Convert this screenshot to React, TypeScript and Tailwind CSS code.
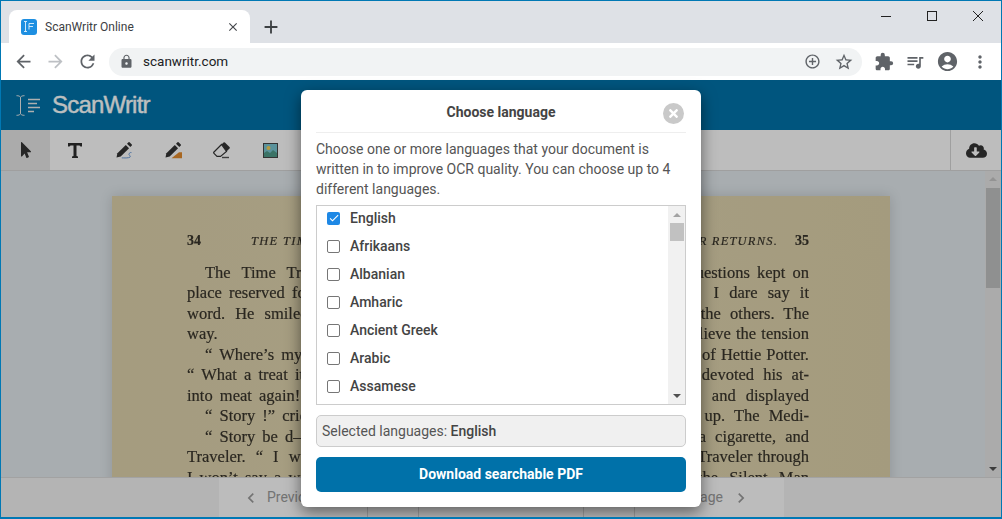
import {
  MdArrowBack,
  MdArrowForward,
  MdRefresh,
  MdLock,
  MdAddCircleOutline,
  MdStarBorder,
  MdExtension,
  MdQueueMusic,
  MdAccountCircle,
  MdMoreVert,
  MdClose,
  MdAdd,
  MdCheck,
  MdChevronLeft,
  MdChevronRight,
} from 'react-icons/md';
import { FaCloudDownloadAlt, FaMousePointer, FaTimes } from 'react-icons/fa';

const languages = ['English', 'Afrikaans', 'Albanian', 'Amharic', 'Ancient Greek', 'Arabic', 'Assamese', 'Azerbaijani'];

const leftLines = [
  { text: 'The Time Traveler came to the', cls: 'pl-[18px] [word-spacing:7px]' },
  { text: 'place reserved for him without a', cls: '' },
  { text: 'word. He smiled quietly, in his', cls: '[word-spacing:6px]' },
  { text: 'way.', cls: '' },
  { text: '“ Where’s my share?” he said.', cls: 'pl-[18px]' },
  { text: '“ What a treat it is to stick a fork', cls: '' },
  { text: 'into meat again! I have been', cls: '' },
  { text: '“ Story !” cried the Editor.', cls: 'pl-[18px]' },
  { text: '“ Story be d—d!” said the Time', cls: 'pl-[18px]' },
  { text: 'Traveler. “ I want something', cls: '[word-spacing:6px]' },
  { text: 'I won’t say a word until I get', cls: '' },
];

const rightLines = [
  { text: 'questions kept on', cls: '' },
  { text: 'I dare say it', cls: '[word-spacing:6px]' },
  { text: 'the others. The', cls: '[word-spacing:5px]' },
  { text: 'relieve the tension', cls: '[word-spacing:1px]' },
  { text: 'of Hettie Potter.', cls: '[word-spacing:1px]' },
  { text: 'devoted his at-', cls: '[word-spacing:5px]' },
  { text: 'and displayed', cls: '[word-spacing:6px]' },
  { text: 'up. The Medi-', cls: '[word-spacing:5px]' },
  { text: 'a cigarette, and', cls: '[word-spacing:5px]' },
  { text: 'Traveler through', cls: '[word-spacing:1px]' },
  { text: 'the Silent Man', cls: '[word-spacing:7px]' },
];

function Pencil({ mark }: { mark: 'squiggle' | 'fill' }) {
  return (
    <svg width="18" height="18" viewBox="0 0 24 24">
      <path d="M2 22l1.200-5.600L14.400 5.200l4.400 4.400L7.600 20.800z" fill="#333" />
      <path d="M16 3.600l2-2a1 1 0 0 1 1.400 0l3 3a1 1 0 0 1 0 1.400l-2 2z" fill="#333" />
      {mark === 'squiggle' ? (
        <path d="M9 22.500c3 0 9 .5 11-1s-3-3-1-5 3-1 3-1" fill="none" stroke="#5b8fd0" strokeWidth="1.200" />
      ) : (
        <path d="M10 23l10-8h4v8z" fill="#e08a2c" />
      )}
    </svg>
  );
}

function EraserIcon() {
  return (
    <svg width="18" height="17" viewBox="0 0 18 17">
      <path d="M8.500 2.500l2-2a1 1 0 0 1 1.400 0l4.600 4.600a1 1 0 0 1 0 1.400l-3 3z" fill="#333" />
      <path d="M8.500 2.500L1 10a1 1 0 0 0 0 1.400l3 3h3.500l6-5z" fill="#fdfdfd" stroke="#333" strokeWidth="1.200" />
      <path d="M9 15.500h7" stroke="#555" strokeWidth="1.400" />
    </svg>
  );
}

function PictureIcon() {
  return (
    <svg width="15" height="15" viewBox="0 0 15 15">
      <rect x="0.500" y="0.500" width="14" height="14" fill="#79c3cf" stroke="#444" />
      <circle cx="5.500" cy="5" r="2" fill="#f2cf55" />
      <path d="M1 14V10l3-2 3 2 3-3 4 3v4z" fill="#4f9a88" />
    </svg>
  );
}

function LogoMark({ className }: { className: string }) {
  return (
    <svg className={className} viewBox="0 0 25 21" fill="none" stroke="currentColor" strokeWidth="1">
      <path d="M0.500 0.700c2 0 3 .3 4 1.500 1-1.200 2-1.500 4-1.500M4.500 2.200v16.600M0.500 20.300c2 0 3-.3 4-1.500 1 1.200 2 1.500 4 1.500" />
      <path d="M12 4.500h12M12 8.500h9M12 12.500h12M12 16.500h6" strokeWidth="1.500" />
    </svg>
  );
}

function ChromeBar() {
  return (
    <div className="shrink-0 font-['Roboto',sans-serif]">
      <div className="h-[42px] bg-[#dee1e6] flex items-end pl-[8px]">
        <div className="w-[241px] h-[33px] bg-white rounded-t-[8px] flex items-center pl-[12px] pr-[10px]">
          <div className="w-4 h-4 rounded-[3px] bg-[#1e8fe1] text-[#cfe8fa] flex items-center justify-center">
            <svg width="12" height="11" viewBox="0 0 12 11" fill="none" stroke="currentColor">
              <path d="M1 .500h3M2.500 .500v10M1 10.500h3M6 2.500h5M6 5.500h4M6 2.500v6" />
            </svg>
          </div>
          <span className="ml-2 text-[12px] text-[#3c4043]">ScanWritr Online</span>
          <MdClose className="ml-auto text-[#45484c]" size={14} />
        </div>
        <div className="w-[42px] h-[33px] flex items-center justify-center">
          <MdAdd className="text-[#3c4043]" size={22} />
        </div>
        <div className="ml-auto self-start flex items-center h-[30px] text-[#222]">
          <div className="w-[46px] flex justify-center">
            <div className="w-[10px] h-px bg-[#222]" />
          </div>
          <div className="w-[46px] flex justify-center">
            <div className="w-[10px] h-[10px] border border-[#222]" />
          </div>
          <div className="w-[46px] flex justify-center">
            <svg width="10" height="10" viewBox="0 0 10 10" stroke="#222">
              <path d="M0 0l10 10M10 0L0 10" />
            </svg>
          </div>
        </div>
      </div>
      <div className="h-[37px] bg-white flex items-center text-[#5f6368]">
        <div className="w-[108px] flex items-center pl-[12px] gap-[11px]">
          <MdArrowBack size={21} />
          <MdArrowForward size={21} className="text-[#bdc0c4]" />
          <MdRefresh size={21} />
        </div>
        <div className="w-[753px] h-7 rounded-full bg-[#f1f3f4] flex items-center pl-[10px] pr-[8px]">
          <MdLock size={15} />
          <span className="ml-[9px] text-[13.500px] text-[#202124]">scanwritr.com</span>
          <MdAddCircleOutline size={17} className="ml-auto" />
          <MdStarBorder size={20} className="ml-[13px]" />
        </div>
        <div className="flex items-center pl-[12px] gap-[11px]">
          <MdExtension size={20} />
          <MdQueueMusic size={20} />
          <MdAccountCircle size={23} />
          <MdMoreVert size={20} />
        </div>
      </div>
    </div>
  );
}

function Toolbar() {
  return (
    <div className="h-[41px] shrink-0 bg-[#fdfdfd] border-b border-[#d5d5d5] flex text-[#333]">
      <div className="w-[49px] bg-[#e5e5e5] flex items-center justify-center">
        <FaMousePointer size={16} />
      </div>
      <div className="w-[49px] flex items-center justify-center">
        <svg width="14" height="15" viewBox="0 0 14 15">
          <path d="M0 0h14v3.500h-1.500l-1-1H8.500v10.500l1.500.500V15H4v-1.500l1.500-.500V2.500h-3l-1 1H0z" fill="#2c2c2c" />
        </svg>
      </div>
      <div className="w-[49px] flex items-center justify-center">
        <Pencil mark="squiggle" />
      </div>
      <div className="w-[49px] flex items-center justify-center">
        <Pencil mark="fill" />
      </div>
      <div className="w-[49px] flex items-center justify-center">
        <EraserIcon />
      </div>
      <div className="w-[49px] flex items-center justify-center">
        <PictureIcon />
      </div>
      <div className="ml-auto w-[51px] border-l border-[#d5d5d5] flex items-center justify-center">
        <FaCloudDownloadAlt size={21} />
      </div>
    </div>
  );
}

function BookPage() {
  return (
    <div className="ml-[111px] mt-[25px] w-[778px] h-[320px] shrink-0 bg-gradient-to-r from-[#dcd0aa] via-[#e0d5b0] to-[#dbcfa8] shadow-[0_0_12px_rgba(0,0,0,0.15)] grid grid-cols-2 pl-[75px] pr-[81px] pt-[35px] font-['Liberation_Serif',serif] text-[#38342b] text-[16.500px] leading-[20.450px] [word-spacing:3px] [-webkit-text-stroke:0.2px] blur-[0.3px]">
      <div className="whitespace-nowrap overflow-hidden">
        <div className="flex gap-[50px] h-[22px] text-[12.500px] [word-spacing:0px] tracking-[1.300px]">
          <b className="text-[14px] tracking-normal">34</b>
          <i>THE TIME TRAVELER</i>
        </div>
        <div className="mt-[10px]">
          {leftLines.map(line => (
            <div key={line.text} className={line.cls}>{line.text}</div>
          ))}
        </div>
      </div>
      <div className="whitespace-nowrap overflow-hidden text-right">
        <div className="flex justify-end gap-[17px] h-[22px] text-[12.500px] [word-spacing:0px] tracking-[1.200px]">
          <i>TRAVELER RETURNS.</i>
          <b className="text-[14px] tracking-normal">35</b>
        </div>
        <div className="mt-[10px]">
          {rightLines.map(line => (
            <div key={line.text} className={line.cls}>{line.text}</div>
          ))}
        </div>
      </div>
    </div>
  );
}

function BottomBar() {
  const cell = 'h-full border-r border-[#d5d5d5] flex items-center';
  return (
    <div className="h-[40px] shrink-0 bg-[#f1f1f1] border-t border-[#d8d8d8] flex justify-center font-['Roboto',sans-serif] text-[14px] text-[#9a9a9a]">
      <div className="ml-[217px] w-[566px] h-full bg-[#fbfbfb] flex border-l border-[#f1f1f1]">
        <div className={`${cell} w-[149px] pl-[22px] gap-[6px]`}>
          <MdChevronLeft size={20} />
          <span>Previous page</span>
        </div>
        <div className={`${cell} w-[51px]`} />
        <div className={`${cell} w-[165px]`} />
        <div className={`${cell} w-[51px]`} />
        <div className="h-full flex-1 flex items-center justify-end pr-[33px] gap-[8px]">
          <span>Next page</span>
          <MdChevronRight size={20} />
        </div>
      </div>
      <div className="flex-1" />
    </div>
  );
}

function LanguageModal() {
  return (
    <div className="absolute left-[300px] top-[10px] w-[400px] h-[417px] bg-white rounded-[6px] shadow-[0_5px_15px_rgba(0,0,0,0.5)] px-[15px] font-['Roboto',sans-serif] text-[14px] text-[#555]">
      <div className="h-[43px] border-b border-[#eee] flex items-center justify-center pt-[2px]">
        <h2 className="text-[14px] font-bold text-[#444]">Choose language</h2>
      </div>
      <div className="absolute left-[362px] top-[13px] w-[21px] h-[21px] rounded-full bg-[#c9c9c9] flex items-center justify-center text-white">
        <FaTimes size={13} />
      </div>
      <p className="mt-[6px] leading-[20px]">
        Choose one or more languages that your document is written in to improve OCR quality. You can choose up to 4 different languages.
      </p>
      <div className="mt-[6px] h-[200px] border border-[#ccc] flex overflow-hidden">
        <div className="flex-1 -mt-[2px]">
          {languages.map((name, i) => (
            <label key={name} className="h-[28px] flex items-center pl-[10px] font-medium text-[#444]">
              <span className={`w-[13px] h-[13px] rounded-[2px] flex items-center justify-center ${i === 0 ? 'bg-[#1e88e5] text-white' : 'border border-[#767676] bg-white'}`}>
                {i === 0 && <MdCheck size={12} />}
              </span>
              <span className="ml-[10px]">{name}</span>
            </label>
          ))}
        </div>
        <div className="w-[17px] bg-[#f1f1f1] flex flex-col items-center">
          <div className="mt-[7px] w-0 h-0 border-x-[4px] border-x-transparent border-b-[4px] border-b-[#a3a3a3]" />
          <div className="mt-[6px] w-[14px] h-[18px] bg-[#c1c1c1]" />
          <div className="mt-auto mb-[6px] w-0 h-0 border-x-[4px] border-x-transparent border-t-[4px] border-t-[#505050]" />
        </div>
      </div>
      <div className="mt-[10px] h-[32px] rounded-[5px] border border-[#ccc] bg-[#f0f0f0] flex items-center pl-[5px]">
        <span>Selected languages: <b className="font-medium text-[#444]">English</b></span>
      </div>
      <button className="mt-[10px] w-full h-[35px] rounded-[5px] bg-[#0071a9] text-white font-bold">
        Download searchable PDF
      </button>
    </div>
  );
}

export default function App() {
  return (
    <div className="w-[1002px] h-[519px] overflow-hidden border-x border-t border-b-2 border-[#0078b4] flex flex-col">
      <ChromeBar />
      <div className="relative flex-1 min-h-0 flex flex-col">
        <div className="h-[50px] shrink-0 bg-[#0072a9] flex items-center pl-[15px]">
          <LogoMark className="w-[25px] h-[21px] text-[#e8eaea]" />
          <span className="ml-[11px] font-['Liberation_Sans',sans-serif] text-[24px] tracking-[-0.800px] text-[#fbffff] [-webkit-text-stroke:0.4px]">ScanWritr</span>
        </div>
        <Toolbar />
        <div className="relative flex-1 min-h-0 bg-[#e0e7eb] flex overflow-hidden">
          <BookPage />
          <div className="absolute right-0 top-0 bottom-0 w-[16px] bg-[#e4e4e4] flex flex-col items-center">
            <div className="mt-[6px] w-0 h-0 border-x-[4px] border-x-transparent border-b-[4px] border-b-[#c4c4c4]" />
            <div className="mt-[7px] w-[14px] h-[100px] bg-[#bfc0c1]" />
            <div className="mt-auto mb-[6px] w-0 h-0 border-x-[4px] border-x-transparent border-t-[4px] border-t-[#505050]" />
          </div>
        </div>
        <BottomBar />
        <div className="absolute inset-0 bg-[rgba(0,0,0,0.25)]" />
        <LanguageModal />
      </div>
    </div>
  );
}
